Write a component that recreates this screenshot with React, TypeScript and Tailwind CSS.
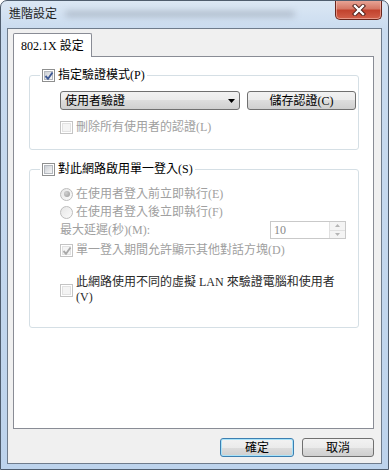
import React from 'react';

const btnBg =
  'bg-[linear-gradient(#f2f2f2_0%,#ebebeb_50%,#dddddd_50%,#cfcfcf_100%)]';

function CheckBox({ checked, disabled }: { checked?: boolean; disabled?: boolean }) {
  return (
    <span
      className={`relative flex w-[13px] h-[13px] shrink-0 p-[1px] border bg-white ${
        disabled ? 'border-[#c4c4c4]' : 'border-[#8e8f8f]'
      }`}
    >
      <span
        className={`block w-full h-full ${
          disabled
            ? 'bg-[#f4f4f4] border border-[#e2e2e2]'
            : 'bg-[linear-gradient(135deg,#cbcfd5,#f6f6f6)] border border-[#b4b8be]'
        }`}
      />
      {checked && (
        <svg className="absolute left-[1px] top-[1px]" width="10" height="10" viewBox="0 0 10 10">
          <path
            d="M1.5 5 L4 7.8 L8.5 1.5"
            stroke={disabled ? '#a9a9a9' : '#3f5a95'}
            strokeWidth="1.9"
            fill="none"
          />
        </svg>
      )}
    </span>
  );
}

function Radio({ checked }: { checked?: boolean }) {
  return (
    <span className="flex w-[13px] h-[13px] shrink-0 rounded-full border border-[#bdbdbd] bg-[linear-gradient(135deg,#e6e6e6,#fbfbfb)] items-center justify-center">
      {checked && <span className="w-[6px] h-[6px] rounded-full bg-[radial-gradient(circle_at_35%_35%,#d0d0d0,#9a9a9a)]" />}
    </span>
  );
}

export default function App() {
  return (
    <div className="relative w-[389px] h-[470px] flex flex-col overflow-hidden rounded-t-[7px] border border-[#4f5d6e] bg-[linear-gradient(180deg,#dbe7f4_0px,#c9dbef_30px,#bdd3ec_100%)] font-['Liberation_Serif','Noto_Sans_CJK_TC',serif] text-[12px] leading-[14px] text-black">
      {/* title bar */}
      <div className="h-[27px] shrink-0 flex items-center pl-[8px] pb-[1px]">
        <span className="text-[#1e1e1e]">進階設定</span>
        <span className="ml-[8px] w-[230px] h-[6px] rounded-full bg-[#8d98a6]/50 blur-[3px]" />
      </div>

      {/* close button */}
      <div className="absolute top-[-1px] right-[6px] w-[47px] h-[20px] rounded-b-[5px] border border-[#6a261c] border-t-0 bg-[linear-gradient(180deg,#e9a99b_0%,#d57866_45%,#c2432e_55%,#d2604a_100%)] flex items-center justify-center shadow-[inset_0_0_0_1px_rgba(255,210,200,0.5)]">
        <svg width="14" height="12" viewBox="0 0 14 12">
          <path d="M3 2 L11 10 M11 2 L3 10" stroke="#4a1b14" strokeWidth="4.2" strokeLinecap="square" />
          <path d="M3 2 L11 10 M11 2 L3 10" stroke="#ffffff" strokeWidth="2.4" strokeLinecap="square" />
        </svg>
      </div>

      {/* client area */}
      <div className="flex-1 mx-[6px] mb-[5px] border border-[#6f7c8c] bg-[#f0f0f0] flex flex-col pl-[5px] pr-[7px] pt-[4px]">
        {/* tab */}
        <div className="relative z-10 -mb-px w-[79px] h-[24px] border border-b-0 border-[#898c95] rounded-t-[2px] bg-white pl-[7px] pt-[5px]">
          802.1X 設定
        </div>

        {/* tab panel */}
        <div className="h-[373px] shrink-0 border border-[#898c95] bg-white flex flex-col">
          {/* group 1 */}
          <div className="mt-[18px] ml-[15px] mr-[14px] border border-[#d5dfe5] rounded-[3px] pl-[30px] pr-[2px] pb-[15px]">
            <div className="-mt-[8px] -ml-[20px] w-fit bg-white px-[2px] h-[14px] flex items-center gap-[3px]">
              <CheckBox checked />
              <span>指定驗證模式(P)</span>
            </div>
            <div className="mt-[9px] flex gap-[7px]">
              <div className={`w-[180px] h-[19px] rounded-[3px] border border-[#707070] ${btnBg} flex items-center pl-[4px] pr-[4px]`}>
                <span className="flex-1">使用者驗證</span>
                <svg width="7" height="4" viewBox="0 0 7 4">
                  <path d="M0 0 H7 L3.5 4 Z" fill="#000" />
                </svg>
              </div>
              <div className={`w-[109px] h-[19px] rounded-[3px] border border-[#707070] ${btnBg} flex items-center justify-center`}>
                儲存認證(C)
              </div>
            </div>
            <div className="mt-[10px] h-[14px] flex items-center gap-[3px] text-[#a0a0a0]">
              <CheckBox disabled />
              <span>刪除所有使用者的認證(L)</span>
            </div>
          </div>

          {/* group 2 */}
          <div className="mt-[19px] ml-[15px] mr-[14px] border border-[#d5dfe5] rounded-[3px] pl-[30px] pr-[2px] pb-[22px]">
            <div className="-mt-[8px] -ml-[20px] w-fit bg-white px-[2px] h-[14px] flex items-center gap-[3px]">
              <CheckBox />
              <span>對此網路啟用單一登入(S)</span>
            </div>
            <div className="mt-[9px] flex flex-col text-[#a0a0a0]">
              <div className="h-[18px] flex items-center gap-[3px]">
                <Radio checked />
                <span>在使用者登入前立即執行(E)</span>
              </div>
              <div className="h-[18px] flex items-center gap-[3px]">
                <Radio />
                <span>在使用者登入後立即執行(F)</span>
              </div>
              <div className="h-[18px] flex items-center">
                <span>最大延遲(秒)(M):</span>
                <div className="ml-auto mr-[10px] w-[76px] h-[18px] border border-[#c9c9c9] bg-white flex items-center pl-[3px]">
                  <span className="flex-1 text-[#8a8a8a]">10</span>
                  <div className="w-[16px] h-full flex flex-col border-l border-[#e0e0e0]">
                    <div className="flex-1 flex items-center justify-center bg-[#f4f4f4] border-b border-[#e0e0e0]">
                      <svg width="5" height="3" viewBox="0 0 5 3"><path d="M0 3 H5 L2.5 0 Z" fill="#b5b5b5" /></svg>
                    </div>
                    <div className="flex-1 flex items-center justify-center bg-[#f4f4f4]">
                      <svg width="5" height="3" viewBox="0 0 5 3"><path d="M0 0 H5 L2.5 3 Z" fill="#b5b5b5" /></svg>
                    </div>
                  </div>
                </div>
              </div>
              <div className="mt-[2px] h-[18px] flex items-center gap-[3px]">
                <CheckBox checked disabled />
                <span>單一登入期間允許顯示其他對話方塊(D)</span>
              </div>
            </div>
            <div className="mt-[16px] flex items-center gap-[3px]">
              <CheckBox disabled />
              <div className="flex flex-col text-[#2a2a2a] leading-[15px]">
                <span>此網路使用不同的虛擬 LAN 來驗證電腦和使用者</span>
                <span>(V)</span>
              </div>
            </div>
          </div>
        </div>

        {/* buttons */}
        <div className="mt-[9px] flex justify-end gap-[8px]">
          <div className={`w-[74px] h-[19px] rounded-[3px] border border-[#3c7fb1] ${btnBg} shadow-[inset_0_0_0_1px_#a9e3f9] flex items-center justify-center`}>
            確定
          </div>
          <div className={`w-[72px] h-[19px] rounded-[3px] border border-[#707070] ${btnBg} flex items-center justify-center`}>
            取消
          </div>
        </div>
      </div>
    </div>
  );
}
